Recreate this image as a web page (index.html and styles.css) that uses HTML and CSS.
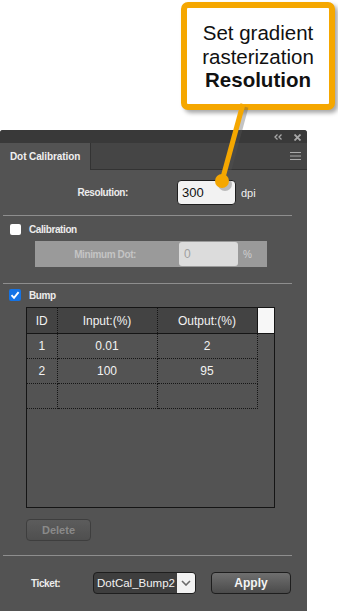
FILE: index.html
```html
<!DOCTYPE html>
<html lang="en">
<head>
    <meta charset="UTF-8">
    <meta name="viewport" content="width=device-width, initial-scale=1.0">
    <title>Dot Calibration</title>
    <link rel="stylesheet" href="styles.css">
</head>
<body>
    <div class="page">
        <div class="callout-area">
            <div class="callout">
                <span>Set gradient</span>
                <span>rasterization</span>
                <strong>Resolution</strong>
            </div>
        </div>

        <div class="panel">
            <div class="titlebar">
                <svg class="tb-icon" width="8" height="6" viewBox="0 0 8 6">
                    <path d="M3.5 0.5 L1 3 L3.5 5.5 M7.5 0.5 L5 3 L7.5 5.5" stroke="#a9a9a9" stroke-width="1.3" fill="none"/>
                </svg>
                <svg class="tb-icon close" width="7" height="7" viewBox="0 0 7 7">
                    <path d="M0.5 0.5 L6.5 6.5 M6.5 0.5 L0.5 6.5" stroke="#a9a9a9" stroke-width="1.8" fill="none"/>
                </svg>
            </div>

            <div class="tabbar">
                <div class="tab">Dot Calibration</div>
                <svg class="menu" width="11" height="8" viewBox="0 0 11 8">
                    <path d="M0 0.5 H11 M0 4 H11 M0 7.5 H11" stroke="#a9a9a9" stroke-width="1"/>
                </svg>
            </div>

            <div class="res-row">
                <span class="label res-label">Resolution:</span>
                <div class="res-input">300</div>
                <span class="unit">dpi</span>
            </div>

            <div class="sep"></div>

            <div class="check-row">
                <span class="checkbox"></span>
                <span class="label">Calibration</span>
            </div>

            <div class="min-box">
                <span class="min-label">Minimum Dot:</span>
                <div class="min-input">0</div>
                <span class="min-unit">%</span>
            </div>

            <div class="sep sep-bump"></div>

            <div class="check-row bump-row">
                <span class="checkbox checked">
                    <svg width="12" height="12" viewBox="0 0 12 12">
                        <path d="M2.5 6.2 L5 8.8 L9.6 3.2" stroke="#fff" stroke-width="1.9" fill="none"/>
                    </svg>
                </span>
                <span class="label">Bump</span>
            </div>

            <div class="grid-box">
                <table class="bump-table">
                    <colgroup>
                        <col class="col-id">
                        <col class="col-val">
                        <col class="col-val">
                    </colgroup>
                    <thead>
                        <tr>
                            <th>ID</th>
                            <th>Input:(%)</th>
                            <th class="last">Output:(%)</th>
                        </tr>
                    </thead>
                    <tbody>
                        <tr><td>1</td><td>0.01</td><td>2</td></tr>
                        <tr><td>2</td><td>100</td><td>95</td></tr>
                        <tr><td></td><td></td><td></td></tr>
                    </tbody>
                </table>
                <div class="corner"></div>
            </div>

            <button class="delete-btn" disabled>Delete</button>

            <div class="sep sep-ticket"></div>

            <div class="ticket-row">
                <span class="label ticket-label">Ticket:</span>
                <div class="select">
                    <span class="select-text">DotCal_Bump2</span>
                    <span class="select-arrow">
                        <svg width="10" height="6" viewBox="0 0 10 6">
                            <path d="M1 1 L5 5 L9 1" stroke="#6a6a6a" stroke-width="1.6" fill="none"/>
                        </svg>
                    </span>
                </div>
                <button class="apply-btn">Apply</button>
            </div>
        </div>

        <svg class="pointer" width="338" height="200" viewBox="0 0 338 200">
            <g opacity="0.35" transform="translate(3 3)">
                <line x1="243" y1="104" x2="222" y2="181" stroke="#555" stroke-width="5"/>
                <circle cx="222" cy="181" r="7" fill="#555"/>
            </g>
            <line x1="243" y1="104" x2="222" y2="181" stroke="#f5a700" stroke-width="5"/>
            <circle cx="222" cy="181" r="7" fill="#f5a700"/>
        </svg>
    </div>
</body>
</html>
```

FILE: styles.css
```css
body {
    margin: 0;
    background: #fff;
    font-family: 'Liberation Sans', Arial, sans-serif;
}

.page {
    position: relative;
    width: 338px;
    height: 611px;
    overflow: hidden;
}

/* callout */
.callout-area {
    height: 130px;
    box-sizing: border-box;
    padding: 2px 0 0 181px;
}

.callout {
    width: 154px;
    height: 108px;
    box-sizing: border-box;
    border: 6px solid #f5a700;
    border-radius: 7px;
    background: #fff;
    box-shadow: 3px 3px 4px rgba(0, 0, 0, 0.35);
    display: flex;
    flex-direction: column;
    align-items: center;
    justify-content: center;
    padding-top: 1px;
    font-size: 20.5px;
    line-height: 23.5px;
    color: #111;
}

.callout strong {
    font-weight: bold;
}

.pointer {
    position: absolute;
    left: 0;
    top: 0;
}

/* panel */
.panel {
    width: 307px;
    height: 481px;
    background: #535353;
    border-radius: 3px 3px 0 0;
    overflow: hidden;
    color: #ececec;
    font-size: 10px;
}

.titlebar {
    height: 13px;
    background: #393939;
    display: flex;
    justify-content: flex-end;
    align-items: center;
    gap: 12px;
    padding-right: 6px;
}

.tb-icon.close {
    margin-top: 1px;
}

.tabbar {
    height: 26px;
    background: #454545;
    border-bottom: 1px solid #333;
    display: flex;
    justify-content: space-between;
    align-items: center;
}

.tab {
    align-self: stretch;
    width: 80px;
    padding-left: 10px;
    background: #535353;
    border-right: 1px solid #333;
    margin-bottom: -1px;
    display: flex;
    align-items: center;
    font-weight: bold;
    letter-spacing: -0.1px;
    color: #f0f0f0;
}

.menu {
    margin-right: 6px;
}

.label {
    font-weight: bold;
    letter-spacing: -0.4px;
    color: #ececec;
}

.res-row {
    margin-top: 10px;
    height: 25px;
    display: flex;
    align-items: center;
}

.res-label {
    width: 128px;
    text-align: right;
    margin-right: 49px;
}

.res-input {
    width: 59px;
    height: 25px;
    box-sizing: border-box;
    border: 1px solid #1e1e1e;
    border-radius: 4px;
    background: #f2f2f2;
    color: #111;
    font-size: 13px;
    line-height: 23px;
    padding-left: 4px;
}

.unit {
    margin-left: 5px;
    font-size: 11px;
    color: #f0f0f0;
}

.sep {
    margin: 10px 0 0 3px;
    width: 289px;
    height: 1px;
    background: #8e8e8e;
}

.check-row {
    margin-top: 7px;
    height: 12px;
    display: flex;
    align-items: center;
    padding-left: 10px;
    gap: 8px;
}

.checkbox {
    width: 11px;
    height: 11px;
    background: #fff;
    border-radius: 2px;
}

.checkbox.checked {
    width: 12px;
    height: 12px;
    background: #1473e6;
    margin-left: -1px;
}

.checkbox svg {
    display: block;
}

.min-box {
    margin: 6px 0 0 35px;
    width: 232px;
    height: 26px;
    background: #9a9a9a;
    display: flex;
    align-items: center;
}

.min-label {
    width: 101px;
    text-align: right;
    margin-right: 43px;
    font-weight: bold;
    letter-spacing: -0.4px;
    color: #c4c4c4;
}

.min-input {
    width: 59px;
    height: 24px;
    box-sizing: border-box;
    border-radius: 3px;
    background: #dcdcdc;
    color: #a0a0a0;
    font-size: 12px;
    line-height: 24px;
    padding-left: 5px;
}

.min-unit {
    margin-left: 5px;
    color: #cfcfcf;
}

.sep-bump {
    margin-top: 16px;
}

.bump-row {
    margin-top: 5px;
}

/* bump table */
.grid-box {
    margin: 6px 0 0 26px;
    width: 249px;
    height: 201px;
    box-sizing: border-box;
    border: 1px solid #151515;
    display: flex;
    align-items: flex-start;
}

.bump-table {
    width: 230px;
    table-layout: fixed;
    border-collapse: collapse;
    font-size: 12px;
    color: #f2f2f2;
    text-align: center;
}

.col-id {
    width: 30px;
}

.col-val {
    width: 100px;
}

.bump-table th {
    height: 25px;
    padding: 0;
    background: #434343;
    font-weight: normal;
    border-bottom: 1px solid #151515;
    border-right: 1px dotted #151515;
}

.bump-table th.last {
    border-right: 1px solid #151515;
}

.bump-table td {
    height: 24px;
    padding: 0;
    border-right: 1px dotted #151515;
    border-bottom: 1px dotted #151515;
}

.corner {
    width: 17px;
    height: 25px;
    background: #f7f7f7;
    border-bottom: 1px solid #151515;
}

.delete-btn {
    display: block;
    margin: 11px 0 0 26px;
    width: 65px;
    height: 22px;
    border: 1px solid #3e3e3e;
    border-radius: 4px;
    background: linear-gradient(#5c5c5c, #4f4f4f);
    color: #8a8a8a;
    font-family: inherit;
    font-size: 11px;
    font-weight: bold;
    padding: 0;
}

.sep-ticket {
    margin-top: 14px;
}

.ticket-row {
    margin-top: 16px;
    height: 22px;
    display: flex;
    align-items: center;
    padding-left: 31px;
}

.ticket-label {
    width: 62px;
}

.select {
    width: 103px;
    height: 22px;
    box-sizing: border-box;
    border: 1px solid #1e1e1e;
    border-radius: 4px;
    background: #3e3e3e;
    display: flex;
    overflow: hidden;
}

.select-text {
    flex: 1;
    white-space: nowrap;
    font-size: 11.5px;
    line-height: 20px;
    padding-left: 3px;
    color: #f2f2f2;
}

.select-arrow {
    width: 18px;
    background: #f2f2f2;
    display: flex;
    align-items: center;
    justify-content: center;
}

.apply-btn {
    margin-left: 15px;
    width: 80px;
    height: 22px;
    border: 1px solid #1e1e1e;
    border-radius: 4px;
    background: linear-gradient(#6f6f6f, #4b4b4b);
    color: #f4f4f4;
    font-family: inherit;
    font-size: 12px;
    font-weight: bold;
    padding: 0;
}
```
